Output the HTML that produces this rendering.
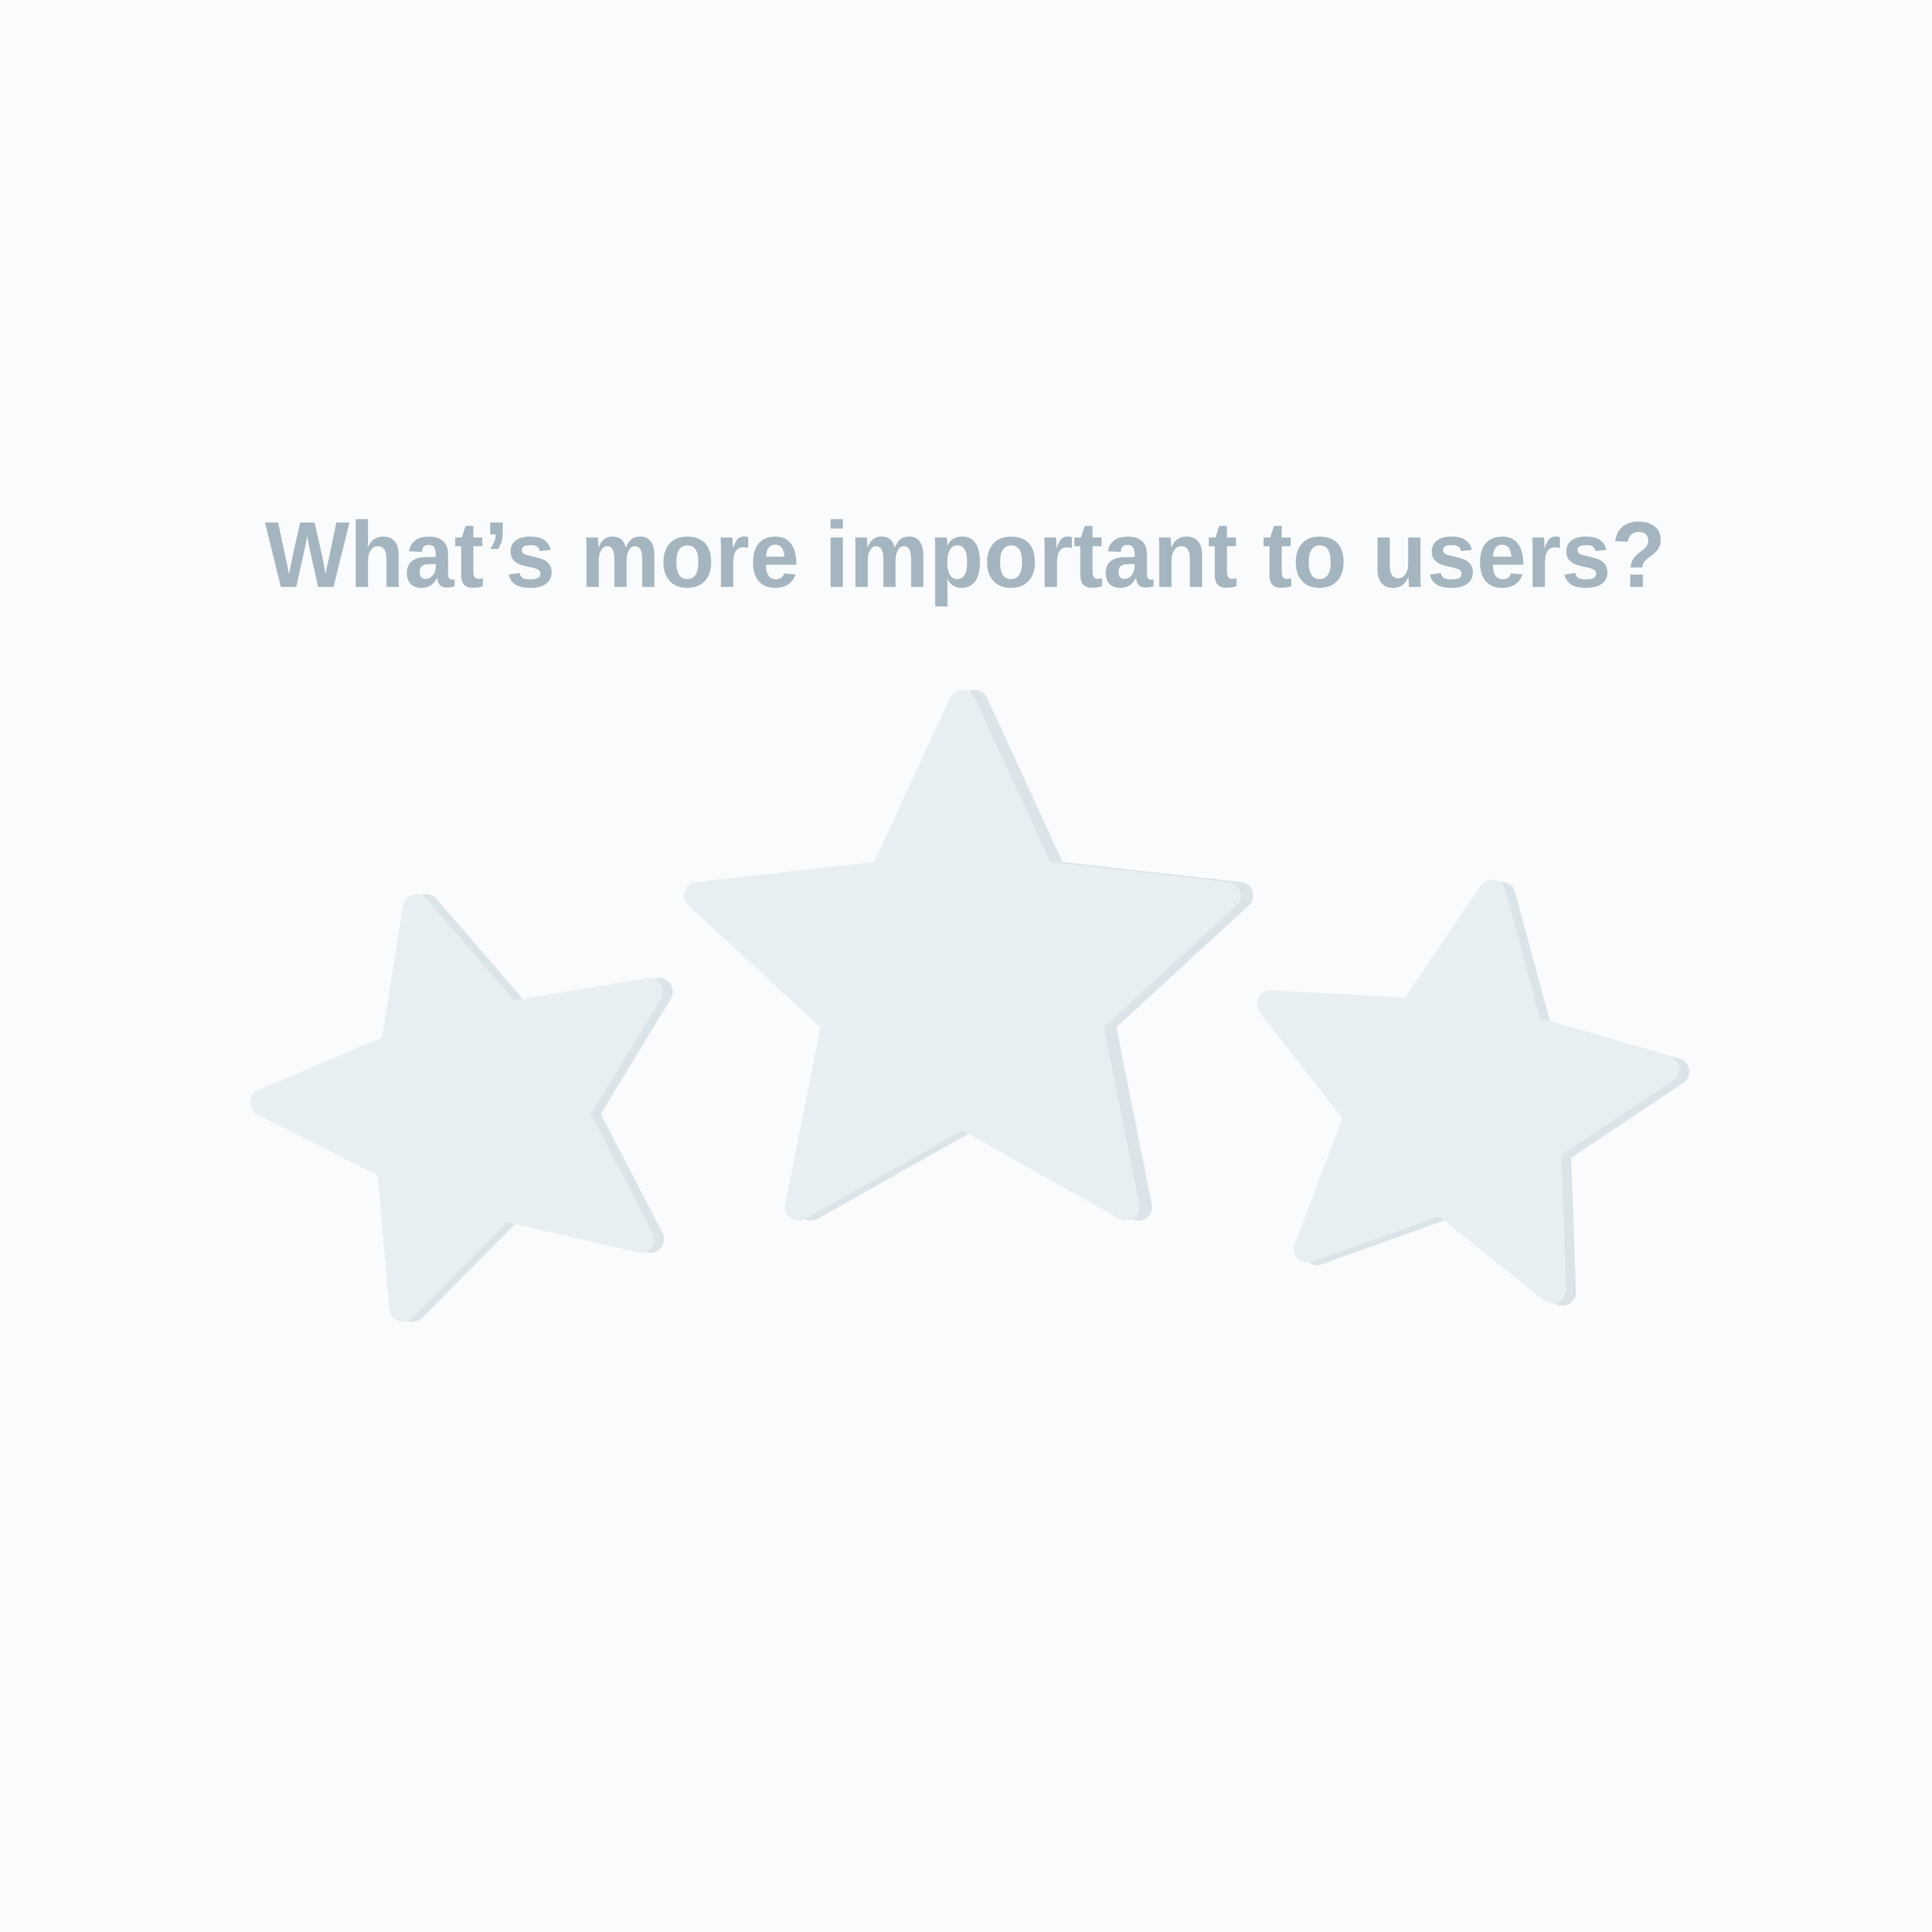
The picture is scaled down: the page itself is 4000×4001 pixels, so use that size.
<!DOCTYPE html>
<html><head><style>
html,body{margin:0;padding:0;background:#f9fbfc;}
svg{display:block;}
</style></head><body>
<svg width="4000" height="4001" viewBox="0 0 1568 1568.4" xmlns="http://www.w3.org/2000/svg">
<rect width="1568" height="1568.4" fill="#f9fbfc"/>
<text x="215" y="476.5" font-family="Liberation Sans, sans-serif" font-weight="bold" font-size="76" fill="#a5b5c0" textLength="1137" lengthAdjust="spacingAndGlyphs">What’s more important to users?</text>
<g stroke-linejoin="round" stroke-width="22">
<!-- center star -->
<polygon transform="translate(10,0)" points="781,571 845,710 996,727 884,830 914,980 781,905 648,980 678,830 566,727 717,710" fill="#dbe4e8" stroke="#dbe4e8"/>
<polygon points="781,571 845,710 996,727 884,830 914,980 781,905 648,980 678,830 566,727 717,710" fill="#e8eff2" stroke="#e8eff2"/>
<!-- left star -->
<polygon transform="translate(8,0)" points="338,737 413,824 527,805 467,904 520,1006 408,980 327,1062 317,947 214,895 320,850" fill="#dbe4e8" stroke="#dbe4e8"/>
<polygon points="338,737 413,824 527,805 467,904 520,1006 408,980 327,1062 317,947 214,895 320,850" fill="#e8eff2" stroke="#e8eff2"/>
<!-- right star -->
<polygon transform="translate(8,2)" points="1211,725 1241,836 1352,868 1256,932 1260,1047 1170,975 1061,1014 1102,906 1031,815 1146,821" fill="#dbe4e8" stroke="#dbe4e8"/>
<polygon points="1211,725 1241,836 1352,868 1256,932 1260,1047 1170,975 1061,1014 1102,906 1031,815 1146,821" fill="#e8eff2" stroke="#e8eff2"/>
</g>
</svg>
</body></html>
